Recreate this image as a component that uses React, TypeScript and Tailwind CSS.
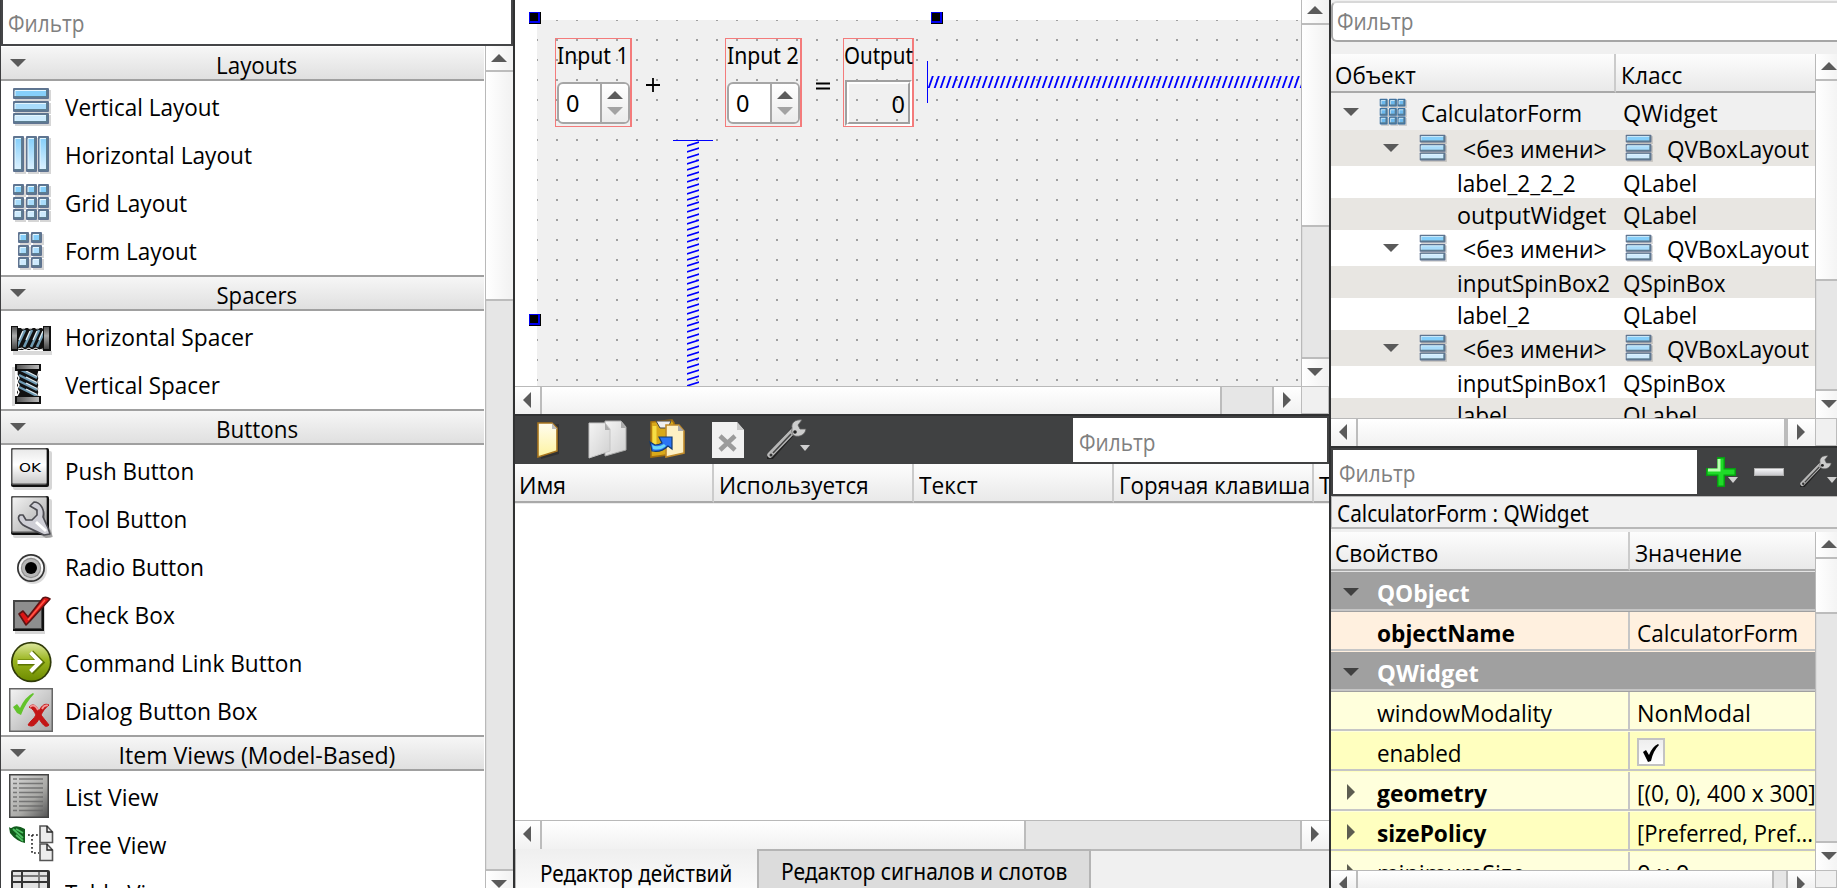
import { useLayoutEffect, useRef, useState, type ReactNode } from "react";

/* Text squeezed horizontally to the advance width `w`. */
function Fit({ w, children, className = "", center = false }: { w: number; children: ReactNode; className?: string; center?: boolean }) {
  const ref = useRef<HTMLSpanElement>(null);
  const [scale, setScale] = useState(1);
  useLayoutEffect(() => {
    if (ref.current) setScale(w / ref.current.offsetWidth);
  }, [w]);
  return (
    <span
      ref={ref}
      className={`inline-block shrink-0 whitespace-nowrap ${center ? "origin-center" : "origin-left"} ${className}`}
      style={{ transform: `scaleX(${scale})` }}
    >
      {children}
    </span>
  );
}

type Dir = "up" | "down" | "left" | "right";
const shapes: Record<Dir, string> = {
  up: "M0 8L8 0L16 8Z",
  down: "M0 0H16L8 8Z",
  left: "M8 0V16L0 8Z",
  right: "M0 0L8 8L0 16Z",
};
function Arrow({ dir, className = "fill-[#5a5a5a]" }: { dir: Dir; className?: string }) {
  const vertical = dir === "up" || dir === "down";
  return (
    <svg width={vertical ? 16 : 8} height={vertical ? 8 : 16} className={`block shrink-0 ${className}`}>
      <path d={shapes[dir]} />
    </svg>
  );
}

function VScroll({ up, handle, down, className }: { up: string; handle: string; down: string; className: string }) {
  return (
    <div className={`flex shrink-0 flex-col overflow-hidden border-l border-[#b9b9b9] bg-[#e6e6e6] ${className}`}>
      <div className={`flex shrink-0 border-b-2 border-[#bcbcbc] bg-linear-to-r from-white to-[#f1f1f1] pl-[5px] ${up}`}>
        <Arrow dir="up" />
      </div>
      <div className={`shrink-0 border-b-2 border-[#bcbcbc] bg-linear-to-r from-white to-[#f1f1f1] ${handle}`} />
      <div className="flex-1 border-x border-[#dcdcdc]" />
      <div className={`flex shrink-0 border-t-2 border-[#bcbcbc] bg-linear-to-r from-white to-[#f1f1f1] pl-[5px] ${down}`}>
        <Arrow dir="down" />
      </div>
    </div>
  );
}

function HScroll({ handle, right, className }: { handle: string; right: string; className: string }) {
  return (
    <div className={`flex shrink-0 overflow-hidden border-t border-[#b9b9b9] bg-[#e6e6e6] ${className}`}>
      <div className="flex w-[27px] shrink-0 border-r-2 border-[#bcbcbc] bg-linear-to-b from-white to-[#f1f1f1] pt-[5px] pl-2">
        <Arrow dir="left" />
      </div>
      <div className={`shrink-0 border-r-2 border-[#bcbcbc] bg-linear-to-b from-white to-[#f1f1f1] ${handle}`} />
      <div className="flex-1" />
      <div className={`flex shrink-0 border-l-2 border-[#bcbcbc] bg-linear-to-b from-white to-[#f1f1f1] pt-[5px] pl-[9px] ${right}`}>
        <Arrow dir="right" />
      </div>
    </div>
  );
}

/* ---------- widget box icons (48×48 cells) ---------- */

function Cell({ x, y, w, h, tone, stroke = "#5f7391" }: { x: number; y: number; w: number; h: number; tone: string; stroke?: string }) {
  return (
    <g>
      <rect x={x + 2} y={y + 2} width={w} height={h} fill="#000" opacity=".16" />
      <rect x={x} y={y} width={w} height={h} rx="1" fill={stroke} />
      <rect x={x + 1.5} y={y + 1.5} width={w - 3} height={h - 3} fill="#5d7e90" />
      <rect x={x + 2} y={y + 2} width={w - 5} height={h - 5} fill={tone} />
      <path d={`M${x + 2} ${y + h - 3}V${y + 2.5}H${x + w - 3}`} fill="none" stroke="#e4f5ff" strokeWidth="1" />
    </g>
  );
}
const tones = ["#86cffa", "#a9dcfb", "#cdeafd"];
const ys = [7, 20, 32];

function VLayoutArt() {
  return <>{ys.map((y, i) => <Cell key={y} x={5} y={y} w={36} h={11} tone={tones[i]} />)}</>;
}
function GridArt({ blue = false }: { blue?: boolean }) {
  return (
    <>
      {ys.map((y, i) =>
        [5, 18, 30].map((x) => (
          <Cell key={`${x}-${y}`} x={x} y={y} w={11} h={11} tone={blue ? "#6db9ee" : tones[i]} stroke={blue ? "#3c72a3" : "#5f7391"} />
        ))
      )}
    </>
  );
}

function ItemIcon({ name }: { name: string }) {
  return (
    <svg width="48" height="48" viewBox="0 0 48 48" className="block shrink-0">
      <defs>
        <linearGradient id="hl" x1="0" y1="0" x2="0" y2="1"><stop offset="0" stopColor="#84cefa" /><stop offset="1" stopColor="#dbf1ff" /></linearGradient>
        <linearGradient id="btn" x1="0" y1="0" x2="0" y2="1"><stop offset="0" stopColor="#e9e9e9" /><stop offset=".45" stopColor="#fff" /><stop offset="1" stopColor="#c9c9c9" /></linearGradient>
        <linearGradient id="grey" x1="0" y1="0" x2="1" y2="1"><stop offset="0" stopColor="#f2f2f2" /><stop offset="1" stopColor="#a8a8a8" /></linearGradient>
        <linearGradient id="dark" x1="0" y1="0" x2="1" y2="1"><stop offset="0" stopColor="#d8d8d8" /><stop offset=".6" stopColor="#a9a9a6" /><stop offset="1" stopColor="#565656" /></linearGradient>
        <linearGradient id="green" x1="0" y1="0" x2="0" y2="1"><stop offset="0" stopColor="#dbe69a" /><stop offset=".45" stopColor="#9ab520" /><stop offset="1" stopColor="#6e8c00" /></linearGradient>
        <linearGradient id="plate" x1="0" y1="0" x2="0" y2="1"><stop offset="0" stopColor="#555" /><stop offset=".4" stopColor="#aaa" /><stop offset="1" stopColor="#444" /></linearGradient>
        <linearGradient id="plateH" x1="0" y1="0" x2="1" y2="0"><stop offset="0" stopColor="#555" /><stop offset="1" stopColor="#bbb" /></linearGradient>
      </defs>
      {name === "v" && <VLayoutArt />}
      {name === "h" && [5, 18, 30].map((x) => <Cell key={x} x={x} y={7} w={11} h={36} tone="url(#hl)" />)}
      {name === "grid" && <GridArt />}
      {name === "form" && ys.map((y, i) => [10, 23].map((x) => <Cell key={`${x}${y}`} x={x} y={y} w={11} h={11} tone={tones[i]} />))}
      {name === "hs" && (
        <>
          <path d="M5 40H44V44H5Z" fill="#000" opacity=".15" />
          <path d="M9 17H36V39H9Z" fill="#111" />
          {[8, 15, 22, 28].map((x) => (
            <g key={x}>
              <path d={`M${x + 1} 36L${x + 9} 19`} stroke="#6f9bb3" strokeWidth="2.6" />
              <path d={`M${x + 3} 29L${x + 7} 20`} stroke="#e2eef4" strokeWidth="1.3" />
            </g>
          ))}
          <path d="M9 17l3-1 3 2 4-2 3 2 4-2 3 2 4-2 3 2M10 38l4-1 3 2 4-2 3 2 4-2 3 2 4-1" stroke="#fff" strokeWidth="1" fill="none" />
          <rect x="3" y="15" width="7" height="25" fill="#111" />
          <rect x="4" y="16" width="5" height="22" fill="url(#plate)" />
          <rect x="35" y="15" width="8" height="25" fill="#111" />
          <rect x="36" y="16" width="5" height="22" fill="url(#plate)" />
        </>
      )}
      {name === "vs" && (
        <>
          <path d="M4 8H7V47H4Z" fill="#000" opacity=".15" />
          <path d="M9 11H31V38H9Z" fill="#111" />
          {[10, 16, 22, 28].map((y) => (
            <g key={y}>
              <path d={`M11 ${y}L29 ${y + 9}`} stroke="#6f9bb3" strokeWidth="2.4" />
              <path d={`M18 ${y + 2}L29 ${y + 7.5}`} stroke="#e2eef4" strokeWidth="1.3" />
            </g>
          ))}
          <path d="M9 12v4l2 3-2 4 2 3-2 4 2 3-2 4M31 12l-1 4 1 3-1 4 1 3-1 4 1 3-1 4" stroke="#fff" strokeWidth="1.4" fill="none" />
          <rect x="7" y="5" width="26" height="7" fill="#111" />
          <rect x="9" y="6" width="22" height="4" fill="url(#plateH)" />
          <rect x="7" y="37" width="26" height="8" fill="#111" />
          <rect x="9" y="38" width="22" height="5" fill="url(#plateH)" />
        </>
      )}
      {(name === "push" || name === "tool") && (
        <>
          <rect x="5" y="6" width="39" height="39" rx="2" fill="#000" opacity=".16" />
          <rect x="3" y="3" width="38" height="39" rx="2" fill="#111" />
          <rect x="3" y="3" width="36" height="37" rx="2" fill="#555" />
          <rect x="4.5" y="4.5" width="34" height="34" rx="1" fill={name === "push" ? "url(#btn)" : "url(#grey)"} />
        </>
      )}
      {name === "push" && (
        <text x="22" y="26.5" textAnchor="middle" textLength="22" lengthAdjust="spacingAndGlyphs" fontSize="13" fontFamily="'DejaVu Sans', sans-serif" fill="#000">OK</text>
      )}
      {name === "tool" && (
        <>
          <path d="M12 22C9 26 13 32 19 34L36 43L43 42L41 36L35 24C36 17 33 11 26 9L23 13L29 19L24 27L15 27Z" fill="#000" opacity=".25" transform="translate(2 2)" />
          <path d="M12 22C8 25 13 32 19 34L36 42L42 41L40 35L35 24C37 16 32 9 26 9L22 13L29 17L29 22L24 27L18 27L15 22Z" fill="#cfcfd6" stroke="#4c4c52" strokeWidth="1.6" strokeLinejoin="round" />
          <path d="M28 29L38 38" stroke="#fff" strokeWidth="3" />
        </>
      )}
      {name === "radio" && (
        <>
          <circle cx="25" cy="29" r="14" fill="#000" opacity=".14" />
          <circle cx="23" cy="27" r="14" fill="#333" />
          <circle cx="23" cy="27" r="12.3" fill="url(#btn)" />
          <circle cx="23" cy="27" r="10.2" fill="#8f8f8f" />
          <circle cx="23" cy="27" r="9" fill="#b5b5b5" />
          <circle cx="23" cy="27" r="6" fill="#000" />
        </>
      )}
      {name === "check" && (
        <>
          <rect x="7" y="14" width="30" height="31" fill="#000" opacity=".16" />
          <rect x="5" y="11" width="31" height="31" fill="#111" />
          <rect x="5" y="11" width="29" height="29" fill="#444" />
          <rect x="7" y="13" width="26" height="26" fill="#8e8e8e" />
          <path d="M11 25L15 22L20 28L35 9Q38 7 42 10L22 32L18 36Z" fill="#dc1414" stroke="#5c1313" strokeWidth="1.6" strokeLinejoin="round" />
          <path d="M20 31L37 11" stroke="#ff5b4a" strokeWidth="1.6" />
        </>
      )}
      {name === "cmd" && (
        <>
          <circle cx="23.3" cy="25" r="20.3" fill="#2f3a08" />
          <circle cx="23.3" cy="25" r="18.6" fill="url(#green)" />
          <path d="M10 25.5H31M23 15.5L33 25.5L23 35.5" fill="none" stroke="#5b7303" strokeWidth="6" />
          <path d="M9.5 25H32M22.5 15.5L32 25L22.5 34.5" fill="none" stroke="#fff" strokeWidth="4" />
        </>
      )}
      {name === "dialog" && (
        <>
          <rect x="1" y="3" width="44" height="44" fill="#666" />
          <rect x="2.5" y="4.5" width="41" height="41" fill="url(#grey)" />
          <path d="M5 22L9 19L12 23Q17 12 25 8L26 9Q18 17 13 30L9 28Z" fill="#63c32c" />
          <path d="M21 22C25 18 28 20 31 26C34 20 37 18 41 20C37 23 35 26 33 30L41 40C37 44 34 38 31 34C28 39 25 43 20 40C22 36 26 34 28 30C26 26 25 24 21 22Z" fill="#c31616" stroke="#c31616" strokeWidth="1" />
          <path d="M22 22C25 19 28 21 30 25M34 24C36 20 38 20 40 20.500" fill="none" stroke="#f39a9a" strokeWidth="1.8" />
        </>
      )}
      {name === "list" && (
        <>
          <rect x="1" y="3" width="40" height="44" fill="#444" />
          <rect x="2.5" y="4.5" width="37" height="41" fill="url(#dark)" />
          {[8, 12.5, 17, 21.5, 26, 30.5, 35, 39.5].map((y) => (
            <path key={y} d={`M5 ${y}H9M11 ${y}H35`} stroke="#666" strokeWidth="1.7" opacity=".8" />
          ))}
        </>
      )}
      {name === "tree" && (
        <>
          <path d="M1 8Q3 10 5 8Q10 6 17 10V24Q8 22 2 14Z" fill="#115c1c" />
          <path d="M5 10L15 19M8 10L15 14M8 16L15 22" stroke="#4fc163" strokeWidth="1.800" />
          <path d="M20 16H31M24 16V34H31" fill="none" stroke="#222" strokeWidth="1.6" strokeDasharray="1.8 2.2" />
          {[7, 25].map((y) => (
            <g key={y}>
              <path d={`M32 ${y}H39L44.5 ${y + 6}V${y + 16.5}H32Z`} fill="#ececec" stroke="#555" strokeWidth="1.6" />
              <path d={`M39 ${y}V${y + 6}H44.5`} fill="none" stroke="#222" strokeWidth="1.4" />
            </g>
          ))}
        </>
      )}
      {name === "table" && (
        <>
          <rect x="3" y="3" width="39" height="44" rx="2" fill="#333" />
          <rect x="5" y="5" width="34" height="44" fill="#e2e2e2" />
          <path d="M5 9H39M31 5V48" stroke="#777" strokeWidth="1.8" />
          <path d="M14 5V48M5 15H39" stroke="#333" strokeWidth="2" />
        </>
      )}
    </svg>
  );
}

type Item = [icon: string, label: string, width: number];
const sections: { title: string; w: number; items: Item[] }[] = [
  { title: "Layouts", w: 81, items: [["v", "Vertical Layout", 155], ["h", "Horizontal Layout", 187], ["grid", "Grid Layout", 122], ["form", "Form Layout", 132]] },
  { title: "Spacers", w: 81, items: [["hs", "Horizontal Spacer", 188], ["vs", "Vertical Spacer", 155]] },
  {
    title: "Buttons", w: 82,
    items: [["push", "Push Button", 129], ["tool", "Tool Button", 122], ["radio", "Radio Button", 139], ["check", "Check Box", 110], ["cmd", "Command Link Button", 237], ["dialog", "Dialog Button Box", 193]],
  },
  { title: "Item Views (Model-Based)", w: 277, items: [["list", "List View", 93], ["tree", "Tree View", 101], ["table", "Table View", 111]] },
];

function WidgetBox() {
  return (
    <div className="flex h-full w-[513px] shrink-0 flex-col border-l border-[#3d3e40] bg-white">
      <div className="h-[46px] shrink-0 border-r-2 border-b-2 border-l-2 border-[#444547] bg-white pt-2 pl-[5px] text-[#808080]">
        <Fit w={76}>Фильтр</Fit>
      </div>
      <div className="flex min-h-0 flex-1">
        <div className="w-[484px] overflow-hidden">
          <div className="-mt-px">
            {sections.map((s, i) => (
              <div key={s.title} className="pb-[2px]">
                <div className={`mr-px flex h-9 border-t-2 border-b-2 border-b-[#a0a0a0] bg-linear-to-b from-[#f6f6f6] to-[#e0e0e0] ${i === 0 ? "border-t-white" : "border-t-[#a0a0a0]"}`}>
                  <div className="w-0 pt-3 pl-[9px]"><Arrow dir="down" /></div>
                  <div className="flex flex-1 justify-center pt-[3px] pl-[20px]"><Fit center w={s.w}>{s.title}</Fit></div>
                </div>
                {s.items.map(([icon, label, w]) => (
                  <div key={label} className="flex h-12 gap-2 pl-[7px]">
                    <ItemIcon name={icon} />
                    <div className="pt-[11px] pl-px"><Fit w={w}>{label}</Fit></div>
                  </div>
                ))}
              </div>
            ))}
          </div>
        </div>
        <VScroll className="w-[28px]" up="h-[26px] pt-2" handle="h-[229px]" down="h-[19px] pt-[9px]" />
      </div>
    </div>
  );
}

/* ---------- form canvas ---------- */

function Grip({ className }: { className: string }) {
  return (
    <div className={`absolute size-3 border-r border-b border-black bg-[#0000f0] pt-px pl-px ${className}`}>
      <div className="size-2 bg-black" />
    </div>
  );
}

function SpinGroup({ label, className }: { label: string; className: string }) {
  return (
    <div className={`absolute h-[89px] w-[77px] border border-r-2 border-[#f47b7b] font-['Noto_Sans','Open_Sans',sans-serif] ${className}`}>
      <div className="h-[43px] pt-[1px] pl-px"><Fit w={72}>{label}</Fit></div>
      <div className="ml-px flex h-[42px] w-[73px] rounded-md border-2 border-[#a6a6a6] bg-white">
        <div className="w-[43px] border-r-2 border-[#a6a6a6] pt-1 pl-[7px]"><Fit w={13}>0</Fit></div>
        <div className="flex flex-1 flex-col gap-2 rounded-r bg-linear-to-b from-white to-[#ececec] pt-[7px] pl-[5px]">
          <Arrow dir="up" />
          <Arrow dir="down" className="fill-[#a3a3a3]" />
        </div>
      </div>
    </div>
  );
}

const hatchH = Array.from({ length: 64 }, (_, i) => `M${391.5 + i * 6} 68.5L${396 + i * 6} 55.5`).join("");
const hatchV = Array.from({ length: 42 }, (_, i) => `M149.5 ${126 + i * 6}L162.5 ${122 + i * 6}`).join("");

function FormCanvas() {
  return (
    <div className="relative h-full w-[786px] overflow-hidden bg-white">
      <svg width="764" height="366" className="absolute top-5 left-[22px] bg-[#f0f0f0]">
        <defs>
          <pattern id="dots" x="19" y="19" width="20" height="20" patternUnits="userSpaceOnUse"><rect width="2" height="2" fill="#a0a0a0" /></pattern>
          <clipPath id="clipH"><rect x="391" y="56" width="373" height="12" /></clipPath>
          <clipPath id="clipV"><rect x="150" y="121" width="12" height="245" /></clipPath>
        </defs>
        <rect width="764" height="366" fill="url(#dots)" />
        <path d={hatchH} clipPath="url(#clipH)" stroke="#00f" strokeWidth="1.8" />
        <rect x="390" y="41" width="1" height="42" fill="#00f" />
        <path d={hatchV} clipPath="url(#clipV)" stroke="#00f" strokeWidth="1.8" />
        <rect x="136" y="120" width="40" height="1" fill="#00f" />
        <path d="M109 65H123M116 58V72M279 63.5H293M279 68.5H293" stroke="#000" strokeWidth="1.8" />
      </svg>
      <Grip className="top-3 left-[14px]" />
      <Grip className="top-3 left-[416px]" />
      <Grip className="top-[314px] left-[14px]" />
      <SpinGroup label="Input 1" className="top-[38px] left-10" />
      <SpinGroup label="Input 2" className="top-[38px] left-[210px]" />
      <div className="absolute top-[38px] left-[328px] h-[89px] w-[71px] border border-r-2 border-[#f47b7b] font-['Noto_Sans','Open_Sans',sans-serif]">
        <div className="h-[41px] pt-[1px]"><Fit w={69}>Output</Fit></div>
        <div className="ml-px h-[46px] w-[67px] border-2 border-t-[#a0a0a0] border-r-white border-b-white border-l-[#a0a0a0]">
          <div className="flex h-full justify-end border-2 border-t-white border-r-[#a0a0a0] border-b-[#a0a0a0] border-l-white pt-[5px] pr-[3px]">
            <Fit w={13}>0</Fit>
          </div>
        </div>
      </div>
    </div>
  );
}

/* ---------- toolbars ---------- */

function Caret({ className }: { className: string }) {
  return <svg width="10" height="6" className={`absolute ${className}`}><path d="M0 0H10L5 6Z" fill="#cfcfcf" /></svg>;
}

function WrenchIcon({ className }: { className: string }) {
  return (
    <svg viewBox="0 0 40 40" className={className}>
      <path d="M3 38L27 11" stroke="#222" strokeWidth="7" strokeLinecap="round" />
      <path d="M3 36L27 11" stroke="#b8b8b8" strokeWidth="5.5" strokeLinecap="round" />
      <path d="M6 34L24 15" stroke="#444" strokeWidth="1.6" />
      <circle cx="4" cy="36" r="1.5" fill="#333" />
      <path d="M25 9C24 4 28 0 35 1L31 6L33 10L39 10C38 16 33 18 28 17Q24 16 25 9Z" fill="#cdcdcd" stroke="#5a5a5a" strokeWidth=".8" />
      <circle cx="28" cy="13" r="1.8" fill="#222" />
    </svg>
  );
}

function ActionToolbar() {
  return (
    <div className="flex h-[50px] shrink-0 border-t-2 border-[#303132] bg-[#404142] pt-[2px]">
      <svg width="252" height="44" className="block shrink-0">
        <defs>
          <linearGradient id="pg" x1="0" y1="0" x2="0" y2="1"><stop offset="0" stopColor="#fffdf0" /><stop offset="1" stopColor="#fdf3a0" /></linearGradient>
          <linearGradient id="gp" x1="0" y1="0" x2="1" y2="1"><stop offset="0" stopColor="#f4f4f4" /><stop offset="1" stopColor="#d0d0d0" /></linearGradient>
        </defs>
        <path d="M26 8L44 6V36L26 41Z" fill="#222" opacity=".5" />
        <path d="M23 5H37L42 10V33L23 39Z" fill="url(#pg)" stroke="#a9761f" strokeWidth="1.6" />
        <path d="M37 5V11H42Z" fill="#bbb" />
        <path d="M90 3H106L111 9V32L90 38Z" fill="url(#gp)" stroke="#aaa" strokeWidth="1" />
        <path d="M74 5H90L95 11V33L74 40Z" fill="url(#gp)" stroke="#c4c4c4" strokeWidth="1" />
        <path d="M90 5V12H95Z M106 3V10H111Z" fill="#aaa" />
        <path d="M136 4L157 2L159 5V36L136 39Z" fill="#d9a91a" stroke="#a5700e" strokeWidth="1.6" />
        <path d="M139.5 8V34" stroke="#f7dd44" strokeWidth="4" />
        <path d="M141 3H156L153 10H145Z" fill="#efefef" stroke="#444" strokeWidth="1" />
        <path d="M151 7H164L169 13V35L151 39Z" fill="#fdf0c4" stroke="#c08a2a" strokeWidth="1.6" />
        <path d="M163 7V13H169Z" fill="#aaa" />
        <path d="M135 24L140 27Q144 27 147 25L144 19H157V31L153 28Q146 35 137 33Z" fill="#2b74f4" stroke="#123a70" strokeWidth="1.2" />
        <path d="M137 27Q143 30 149 26L151 28Q145 33 138 31Z" fill="#6bd7f7" />
        <path d="M197 4H222L229 12V40H197Z" fill="#f1f1f1" />
        <path d="M222 4V12H229Z" fill="#c9c9c9" />
        <path d="M205 18L220 32M220 18L205 32" stroke="#9b9b9b" strokeWidth="4.5" />
      </svg>
      <div className="relative w-[306px] shrink-0 pt-px">
        <WrenchIcon className="size-10" />
        <Caret className="top-[27px] left-[33px]" />
      </div>
      <div className="h-11 w-[254px] bg-white pt-[9px] pl-[6px] text-[#808080]"><Fit w={76}>Фильтр</Fit></div>
    </div>
  );
}

function HeadCell({ children, className }: { children: ReactNode; className: string }) {
  return (
    <div className={`h-full shrink-0 overflow-hidden border-b-2 border-b-[#a9a9a9] bg-linear-to-b from-[#fdfdfd] to-[#e9e9e9] pt-[6px] ${className}`}>{children}</div>
  );
}
const sep = "border-r-2 border-r-[#cbcbcb]";

function Center() {
  return (
    <div className="flex h-full w-[818px] shrink-0 flex-col border-x-2 border-[#303132] bg-white">
      <div className="flex h-[386px] shrink-0">
        <FormCanvas />
        <VScroll className="w-[28px]" up="h-[25px] pt-[6px]" handle="h-[202px]" down="h-[29px] pt-[9px]" />
      </div>
      <div className="flex h-7 shrink-0">
        <HScroll className="w-[786px]" handle="w-[680px]" right="w-[29px]" />
        <div className="flex-1 border border-[#bcbcbc] bg-[#f0f0f0]" />
      </div>
      <ActionToolbar />
      <div className="flex h-[39px] shrink-0 overflow-hidden">
        <HeadCell className={`w-[199px] pl-1 ${sep}`}><Fit w={47}>Имя</Fit></HeadCell>
        <HeadCell className={`w-[200px] pl-[5px] ${sep}`}><Fit w={150}>Используется</Fit></HeadCell>
        <HeadCell className={`w-[200px] pl-[5px] ${sep}`}><Fit w={59}>Текст</Fit></HeadCell>
        <HeadCell className={`w-[200px] pl-[5px] ${sep}`}><Fit w={191}>Горячая клавиша</Fit></HeadCell>
        <HeadCell className="w-[15px] pl-[5px]"><Fit w={13}>Т</Fit></HeadCell>
      </div>
      <div className="flex-1 border-t border-[#ececec]" />
      <HScroll className="h-[29px]" handle="w-[484px]" right="w-[29px]" />
      <div className="flex h-[39px] shrink-0 bg-[#f0f0f0] font-['Noto_Sans','Open_Sans',sans-serif]">
        <div className="w-[242px] border-l border-[#b4b4b4] bg-linear-to-b from-[#efefef] to-[#fafafa] pt-[9px] pl-6"><Fit w={192}>Редактор действий</Fit></div>
        <div className="w-[334px] border-t-2 border-r-2 border-l-2 border-[#b4b4b4] bg-[#dcdcdc] pt-[5px] pl-[22px]"><Fit w={286}>Редактор сигналов и слотов</Fit></div>
        <div className="flex-1 border-t-2 border-[#b9b9b9]" />
      </div>
    </div>
  );
}

/* ---------- object inspector ---------- */

function SmallIcon({ grid = false }: { grid?: boolean }) {
  return (
    <svg width="30" height="30" viewBox="4 6 42 42" className="block shrink-0">
      {grid ? <GridArt blue /> : <VLayoutArt />}
    </svg>
  );
}

const stripe = ["bg-white", "bg-[#e8e6e2]"];
type TreeRow = { layout?: boolean; name: string; w: number; cls: string; cw: number };
const vbox: TreeRow = { layout: true, name: "<без имени>", w: 144, cls: "QVBoxLayout", cw: 142 };
const tree: TreeRow[] = [
  vbox,
  { name: "label_2_2_2", w: 119, cls: "QLabel", cw: 74 },
  { name: "outputWidget", w: 149, cls: "QLabel", cw: 74 },
  vbox,
  { name: "inputSpinBox2", w: 153, cls: "QSpinBox", cw: 103 },
  { name: "label_2", w: 73, cls: "QLabel", cw: 74 },
  vbox,
  { name: "inputSpinBox1", w: 152, cls: "QSpinBox", cw: 103 },
  { name: "label", w: 51, cls: "QLabel", cw: 74 },
];

function Inspector() {
  return (
    <>
      <div className="h-[54px] shrink-0 bg-[#f0f0f0] pt-px">
        <div className="h-[41px] w-[520px] rounded-md border-2 border-t-[#d8d8d8] border-[#a6a6a6] bg-white pt-[3px] pl-1 text-[#808080]"><Fit w={76}>Фильтр</Fit></div>
      </div>
      <div className="flex h-[364px] shrink-0">
        <div className="flex w-[484px] shrink-0 flex-col overflow-hidden">
          <div className="flex h-[39px] shrink-0">
            <HeadCell className={`w-[285px] pl-1 ${sep}`}><Fit w={81}>Объект</Fit></HeadCell>
            <HeadCell className="flex-1 pl-[5px]"><Fit w={61}>Класс</Fit></HeadCell>
          </div>
          <div className="flex h-[37px] shrink-0 bg-[#f0f0f0]">
            <div className="flex w-[292px] pl-3">
              <div className="pt-[15px]"><Arrow dir="down" /></div>
              <div className="pt-[5px] pr-[12px] pl-5"><SmallIcon grid /></div>
              <div className="pt-[5px]"><Fit w={161}>CalculatorForm</Fit></div>
            </div>
            <div className="pt-[5px]"><Fit w={95}>QWidget</Fit></div>
          </div>
          {tree.map((r, i) => (
            <div key={i} className={`flex shrink-0 ${r.layout ? "h-9" : "h-8"} ${stripe[(i + 1) % 2]}`}>
              {r.layout ? (
                <>
                  <div className="flex w-[294px] pl-[52px]">
                    <div className="pt-[14px]"><Arrow dir="down" /></div>
                    <div className="pt-1 pr-[14px] pl-[20px]"><SmallIcon /></div>
                    <div className="pt-[4px]"><Fit w={144}>{r.name}</Fit></div>
                  </div>
                  <div className="pt-1"><SmallIcon /></div>
                  <div className="pt-[4px] pl-3"><Fit w={r.cw}>{r.cls}</Fit></div>
                </>
              ) : (
                <>
                  <div className="w-[292px] pt-[2px] pl-[126px]"><Fit w={r.w}>{r.name}</Fit></div>
                  <div className="pt-[2px]"><Fit w={r.cw}>{r.cls}</Fit></div>
                </>
              )}
            </div>
          ))}
        </div>
        <VScroll className="w-[28px]" up="h-[27px] pt-2" handle="h-[200px]" down="h-[29px] pt-[9px]" />
      </div>
      <div className="flex h-7 shrink-0">
        <HScroll className="w-[484px]" handle="w-[428px]" right="w-[29px]" />
        <div className="flex-1 border border-[#bcbcbc] bg-[#f0f0f0]" />
      </div>
    </>
  );
}

/* ---------- property editor ---------- */

type Prop = { name: string; w: number; bg: string; value?: string; vw?: number; bold?: boolean; arrow?: Dir; group?: boolean; check?: boolean };
const props: Prop[] = [
  { name: "QObject", w: 93, bg: "bg-[#a0a0a0]", group: true, arrow: "down" },
  { name: "objectName", w: 138, bg: "bg-[#fff0df]", value: "CalculatorForm", vw: 161, bold: true },
  { name: "QWidget", w: 102, bg: "bg-[#a0a0a0]", group: true, arrow: "down" },
  { name: "windowModality", w: 175, bg: "bg-[#ffffdc]", value: "NonModal", vw: 114 },
  { name: "enabled", w: 85, bg: "bg-[#ffffbf]", check: true },
  { name: "geometry", w: 110, bg: "bg-[#ffffdc]", value: "[(0, 0), 400 x 300]", vw: 179, bold: true, arrow: "right" },
  { name: "sizePolicy", w: 109, bg: "bg-[#ffffbf]", value: "[Preferred, Pref...", vw: 176, bold: true, arrow: "right" },
  { name: "minimumSize", w: 148, bg: "bg-[#ffffdc]", value: "0 x 0", vw: 52, arrow: "right" },
];

function PropertyEditor() {
  return (
    <>
      <div className="flex h-[50px] shrink-0 overflow-hidden border-t-2 border-[#303132] bg-[#404142] pt-[2px] pl-[2px]">
        <div className="h-11 w-[364px] shrink-0 bg-white pt-2 pl-[6px] text-[#808080]"><Fit w={76}>Фильтр</Fit></div>
        <div className="relative w-[44px] shrink-0 pt-[7px] pl-[9px]">
          <svg width="30" height="30" className="block">
            <path d="M11 0H19V11H30V19H19V30H11V19H0V11H11Z" fill="#089c12" />
            <path d="M12.5 1.5H17.5V12.5H28.5V17.5H17.5V28.5H12.5V17.5H1.5V12.5H12.5Z" fill="#1fdc28" />
            <path d="M13 2V13H2" fill="none" stroke="#b9ffb0" strokeWidth="3" />
          </svg>
          <Caret className="top-[27px] left-[31px]" />
        </div>
        <div className="w-12 shrink-0 pt-[18px] pl-[13px]">
          <div className="h-2 w-[30px] border border-[#b0b0b0] bg-linear-to-b from-[#f5f5f8] to-[#c8c8cc]" />
        </div>
        <div className="relative w-12 shrink-0 pt-[5px] pl-[11px]">
          <WrenchIcon className="size-8" />
          <Caret className="top-[27px] left-[38px]" />
        </div>
      </div>
      <div className="h-[33px] shrink-0 border-t border-b-2 border-l border-[#b8b8b8] bg-[#f1f1f1] pt-px pl-[5px] font-['Noto_Sans','Open_Sans',sans-serif]">
        <Fit w={252}>CalculatorForm : QWidget</Fit>
      </div>
      <div className="flex h-[341px] shrink-0 bg-[#f0f0f0] pt-[3px]">
        <div className="flex w-[484px] shrink-0 flex-col overflow-hidden">
          <div className="flex h-[39px] shrink-0">
            <HeadCell className={`w-[299px] pl-1 ${sep}`}><Fit w={103}>Свойство</Fit></HeadCell>
            <HeadCell className="flex-1 pl-[5px]"><Fit w={107}>Значение</Fit></HeadCell>
          </div>
          <div className="h-px shrink-0 bg-[#e4e4e4]" />
          {props.map((p) => (
            <div key={p.name} className={`flex h-10 shrink-0 ${p.bg}`}>
              <div className={`flex h-[39px] w-[299px] shrink-0 border-b-2 border-b-[#c6c6c6] ${p.group ? "" : "border-r-2 border-r-[#c6c6c6]"}`}>
                <div className={`w-[46px] ${p.arrow === "down" ? "pt-4 pl-3" : "pt-[12px] pl-4"}`}>
                  {p.arrow && <Arrow dir={p.arrow} className={p.group ? "fill-[#404040]" : "fill-[#5d5d50]"} />}
                </div>
                <div className="pt-[6px]">
                  <Fit w={p.w} className={p.group ? "font-bold text-white" : p.bold ? "font-bold" : ""}>{p.name}</Fit>
                </div>
              </div>
              <div className="h-[39px] flex-1 border-b-2 border-b-[#c6c6c6] pt-[6px] pl-[7px]">
                {p.value && <Fit w={p.vw ?? 10}>{p.value}</Fit>}
                {p.check && (
                  <div className="size-7 border-2 border-[#c3c3c3] bg-linear-to-b from-[#eee] to-white">
                    <svg width="24" height="24" className="block"><path d="M4 12L7 10L10 15Q13 7 19 4L20 5Q14 11 12 21L9 22Z" fill="#000" /></svg>
                  </div>
                )}
              </div>
            </div>
          ))}
        </div>
        <VScroll className="w-[28px]" up="h-[27px] pt-2" handle="h-[55px]" down="h-[29px] pt-[9px]" />
      </div>
      <div className="flex h-[18px] shrink-0">
        <HScroll className="w-[484px]" handle="w-[416px]" right="w-[29px]" />
        <div className="flex-1 border border-[#bcbcbc] bg-[#f0f0f0]" />
      </div>
    </>
  );
}

export default function App() {
  return (
    <div className="flex h-[888px] w-[1837px] overflow-hidden bg-white font-['Open_Sans','Noto_Sans',sans-serif] text-[23.5px] leading-[30px] text-black">
      <WidgetBox />
      <Center />
      <div className="flex h-full min-w-0 flex-1 flex-col overflow-hidden">
        <Inspector />
        <PropertyEditor />
      </div>
    </div>
  );
}
